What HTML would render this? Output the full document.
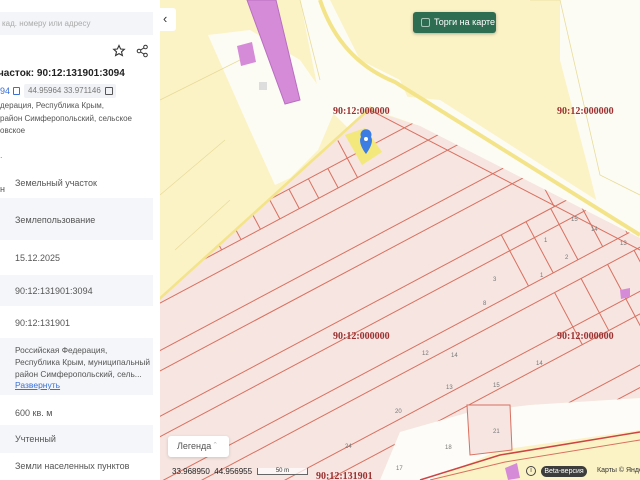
<!DOCTYPE html>
<html><head><meta charset="utf-8"><style>
*{margin:0;padding:0;box-sizing:border-box}
html,body{width:640px;height:480px;overflow:hidden}
body{position:relative;font-family:"Liberation Sans","DejaVu Sans",sans-serif;background:#fff}
#map{position:absolute;left:160px;top:0;width:480px;height:480px}
#panel{position:absolute;left:0;top:0;width:160px;height:480px;background:#fff;overflow:hidden}
.t{position:absolute;white-space:nowrap;color:#555;font-size:9px}
.row{position:absolute;left:0;width:153px;background:#f4f6f9}
</style></head><body>
<svg id="map" viewBox="160 0 480 480" xmlns="http://www.w3.org/2000/svg">
<defs><clipPath id="pk"><polygon points="160,300 370,110 420,126 640,238 640,398 530,405 470,412 400,432 380,480 160,480"/></clipPath></defs>
<rect x="160" y="0" width="480" height="480" fill="#fbf3c6"/>
<polygon points="560,0 640,0 640,235 600,215 590,175 560,60" fill="#fdfcf4"/>
<polygon points="208,35 250,30 300,60 335,110 318,150 290,178 275,185 250,130" fill="#fdfcf4"/>
<polygon points="300,0 330,0 360,60 400,80 420,126 380,112 350,130 320,100" fill="#fdfcf4"/>
<polygon points="390,95 440,100 640,228 640,240 420,126" fill="#fdfcf4"/>
<path d="M160,300 L372,108" stroke="#f3e48a" stroke-width="5" fill="none"/>
<path d="M320,0 Q340,60 395,82 L640,235" stroke="#f3e48a" stroke-width="4" fill="none"/>
<path d="M160,100 L240,60 M160,195 L225,140 M175,250 L230,200 M300,0 L320,80 M530,0 L560,0 L600,175 L640,195" stroke="#e8dc9a" stroke-width="0.8" fill="none"/>
<polygon points="160,300 370,110 420,126 640,238 640,398 530,405 470,412 400,432 380,480 160,480" fill="#f6e5e1"/>
<g clip-path="url(#pk)" stroke="#d9705f" stroke-width="1" fill="none">
<g transform="rotate(-28 400 300)">
<line x1="0" y1="150" x2="800" y2="150"/>
<line x1="0" y1="172" x2="800" y2="172"/>
<line x1="0" y1="190" x2="800" y2="190"/>
<line x1="0" y1="232" x2="800" y2="232"/>
<line x1="0" y1="250" x2="800" y2="250"/>
<line x1="0" y1="290" x2="800" y2="290"/>
<line x1="0" y1="308" x2="800" y2="308"/>
<line x1="0" y1="348" x2="800" y2="348"/>
<line x1="0" y1="366" x2="800" y2="366"/>
<line x1="0" y1="405" x2="800" y2="405"/>
<line x1="0" y1="425" x2="800" y2="425"/>
<line x1="0" y1="470" x2="800" y2="470"/>
<line x1="0" y1="490" x2="800" y2="490"/>
<g>
<line x1="200" y1="150" x2="200" y2="172"/><line x1="222" y1="150" x2="222" y2="172"/><line x1="244" y1="150" x2="244" y2="172"/><line x1="266" y1="150" x2="266" y2="172"/><line x1="288" y1="150" x2="288" y2="172"/><line x1="310" y1="150" x2="310" y2="172"/><line x1="332" y1="150" x2="332" y2="172"/><line x1="354" y1="150" x2="354" y2="172"/><line x1="376" y1="150" x2="376" y2="172"/><line x1="398" y1="150" x2="398" y2="172"/><line x1="420" y1="130" x2="420" y2="172"/>
<line x1="520" y1="290" x2="520" y2="348"/><line x1="548" y1="290" x2="548" y2="348"/><line x1="576" y1="290" x2="576" y2="348"/><line x1="604" y1="290" x2="604" y2="348"/><line x1="632" y1="290" x2="632" y2="348"/><line x1="660" y1="290" x2="660" y2="348"/>
<line x1="540" y1="366" x2="540" y2="425"/><line x1="570" y1="366" x2="570" y2="425"/><line x1="600" y1="366" x2="600" y2="425"/><line x1="630" y1="366" x2="630" y2="425"/><line x1="660" y1="366" x2="660" y2="425"/><line x1="690" y1="366" x2="690" y2="425"/><line x1="720" y1="366" x2="720" y2="425"/>
<line x1="580" y1="232" x2="580" y2="290"/><line x1="620" y1="232" x2="620" y2="290"/><line x1="660" y1="232" x2="660" y2="290"/><line x1="700" y1="232" x2="700" y2="290"/>
<line x1="600" y1="425" x2="600" y2="490"/><line x1="640" y1="425" x2="640" y2="490"/><line x1="680" y1="425" x2="680" y2="490"/><line x1="720" y1="425" x2="720" y2="490"/>
</g>
</g>
<path d="M370,110 L640,250 M440,130 L640,235" />
</g>
<polygon points="400,432 470,412 530,405 640,398 640,430 500,450 430,480 380,480" fill="#fdfcf8"/>
<path d="M420,480 L500,455 L640,432" stroke="#c44" stroke-width="1.5" fill="none"/>
<path d="M430,480 L505,462 L640,440" stroke="#d9705f" stroke-width="1" fill="none"/>
<polygon points="467,405 510,405 512,450 470,455" fill="#f6e5e1" stroke="#d9705f"/>
<polygon points="247,0 276,0 300,100 285,104" fill="#d58bd8" stroke="#b96ec0"/>
<polygon points="237,46 252,42 256,62 241,66" fill="#d58bd8"/>
<rect x="259" y="82" width="8" height="8" fill="#ddd"/>
<polygon points="505,468 517,463 520,478 508,480" fill="#d58bd8"/>
<polygon points="620,290 630,288 630,297 621,299" fill="#d58bd8"/>
<polygon points="345,135 365,128 382,152 362,165" fill="#f3e87c"/>
<path d="M366,154 C360,146 359,140 361,137 a5.5,5.5 0 1 1 10,0 C373,140 372,146 366,154z" fill="#3b7de3"/>
<circle cx="366" cy="139" r="2" fill="#fff"/>
<g font-family="Liberation Serif,serif" font-weight="bold" font-size="10" fill="#9b3030">
<text x="333" y="114">90:12:000000</text><text x="557" y="114">90:12:000000</text>
<text x="333" y="339">90:12:000000</text><text x="557" y="339">90:12:000000</text>
<text x="316" y="479">90:12:131901</text>
</g>
<g font-size="6" fill="#777"><text x="571" y="221">15</text><text x="591" y="231">14</text><text x="544" y="242">1</text><text x="620" y="245">13</text><text x="565" y="259">2</text><text x="493" y="281">3</text><text x="540" y="277">1</text><text x="483" y="305">8</text><text x="422" y="355">12</text><text x="451" y="357">14</text><text x="493" y="387">15</text><text x="395" y="413">20</text><text x="345" y="448">24</text><text x="446" y="389">13</text><text x="536" y="365">14</text><text x="493" y="433">21</text><text x="396" y="470">17</text><text x="445" y="449">18</text></g>
</svg>

<div style="position:absolute;left:160px;top:8px;width:16px;height:23px;background:#fff;border-radius:0 3px 3px 0;font-size:13px;color:#333;line-height:22px;padding-left:3px">&#8249;</div>
<div style="position:absolute;left:413px;top:12px;width:83px;height:21px;background:#2e6d52;border-radius:3px;color:#fff;font-size:9px;line-height:21px;padding-left:21px;white-space:nowrap;overflow:hidden;box-shadow:0 1px 3px rgba(0,0,0,.3)"><span style="position:absolute;left:8px;top:6px;width:9px;height:9px;border:1px solid #a8c6b8;border-radius:2px"></span>Торги на карте</div>
<div style="position:absolute;left:168px;top:436px;width:61px;height:21px;background:#fff;border-radius:3px;font-size:9px;color:#555;line-height:21px;padding-left:9px;white-space:nowrap;box-shadow:0 1px 3px rgba(0,0,0,.15)">Легенда <span style="color:#aaa">&#710;</span></div>
<div class="t" style="left:172px;top:467px;font-size:8px;color:#222">33.968950 &nbsp;44.956955</div>
<div style="position:absolute;left:257px;top:468px;width:51px;height:7px;border:1px solid #666;border-top:none;background:rgba(255,255,255,.7);font-size:6px;color:#333;text-align:center;line-height:7px">50 m</div>
<div style="position:absolute;left:526px;top:466px;width:10px;height:10px;border:1px solid #444;border-radius:50%;font-size:7px;text-align:center;line-height:8px;color:#444">i</div>
<div style="position:absolute;left:541px;top:466px;width:46px;height:11px;background:#3c3c3c;border-radius:6px;color:#fff;font-size:7px;text-align:center;line-height:11px;white-space:nowrap">Beta-версия</div>
<div class="t" style="left:597px;top:467px;font-size:7px;color:#333">Карты © Яндекс</div>

<div id="panel">
<div style="position:absolute;left:0;top:12px;width:153px;height:23px;background:#f3f5f8;font-size:8px;color:#aaa;line-height:23px;padding-left:2px;white-space:nowrap">кад. номеру или адресу</div>
<svg style="position:absolute;left:112px;top:44px" width="14" height="14" viewBox="0 0 14 14"><path d="M7,1.5 L8.6,5 L12.3,5.3 L9.5,7.8 L10.4,11.5 L7,9.6 L3.6,11.5 L4.5,7.8 L1.7,5.3 L5.4,5 Z" fill="none" stroke="#333" stroke-width="1.1"/></svg>
<svg style="position:absolute;left:136px;top:44px" width="13" height="14" viewBox="0 0 13 14"><circle cx="9.5" cy="3" r="1.8" fill="none" stroke="#333"/><circle cx="3" cy="7" r="1.8" fill="none" stroke="#333"/><circle cx="9.5" cy="11" r="1.8" fill="none" stroke="#333"/><path d="M4.5,6 L8,3.9 M4.5,8 L8,10.1" stroke="#333"/></svg>
<div class="t" style="left:-2px;top:68px;font-size:10px;color:#222;font-weight:bold">часток: 90:12:131901:3094</div>
<div class="t" style="left:0;top:86px;color:#3a6fd8">94</div>
<div style="position:absolute;left:13px;top:87px;width:7px;height:8px;border:1px solid #3a6fd8;border-radius:1px"></div>
<div style="position:absolute;left:24px;top:84px;width:92px;height:14px;background:#f0f2f5;border-radius:2px"></div>
<div class="t" style="left:28px;top:86px;color:#777;font-size:8px">44.95964 33.971146</div>
<div style="position:absolute;left:105px;top:87px;width:8px;height:8px;border:1px solid #555;border-radius:1px"></div>
<div class="t" style="left:0;top:100px;line-height:12.5px;font-size:8px">дерация, Республика Крым,<br> район Симферопольский, сельское<br>овское</div>
<div class="t" style="left:0;top:150px;color:#888">.</div>
<div class="t" style="left:0;top:184px;color:#555">н</div>
<div class="t" style="left:15px;top:178px">Земельный участок</div>
<div class="row" style="top:198px;height:42px"></div>
<div class="t" style="left:15px;top:215px">Землепользование</div>
<div class="t" style="left:15px;top:253px">15.12.2025</div>
<div class="row" style="top:275px;height:31px"></div>
<div class="t" style="left:15px;top:286px">90:12:131901:3094</div>
<div class="t" style="left:15px;top:318px">90:12:131901</div>
<div class="row" style="top:338px;height:57px"></div>
<div class="t" style="left:15px;top:344px;line-height:12px;font-size:8.3px">Российская Федерация,<br>Республика Крым, муниципальный<br>район Симферопольский, сель...</div>
<div class="t" style="left:15px;top:380px;color:#3a6fd8;text-decoration:underline;font-size:8.5px">Развернуть</div>
<div class="t" style="left:15px;top:408px">600 кв. м</div>
<div class="row" style="top:425px;height:28px"></div>
<div class="t" style="left:15px;top:434px">Учтенный</div>
<div class="t" style="left:15px;top:461px">Земли населенных пунктов</div>
</div>
</body></html>
